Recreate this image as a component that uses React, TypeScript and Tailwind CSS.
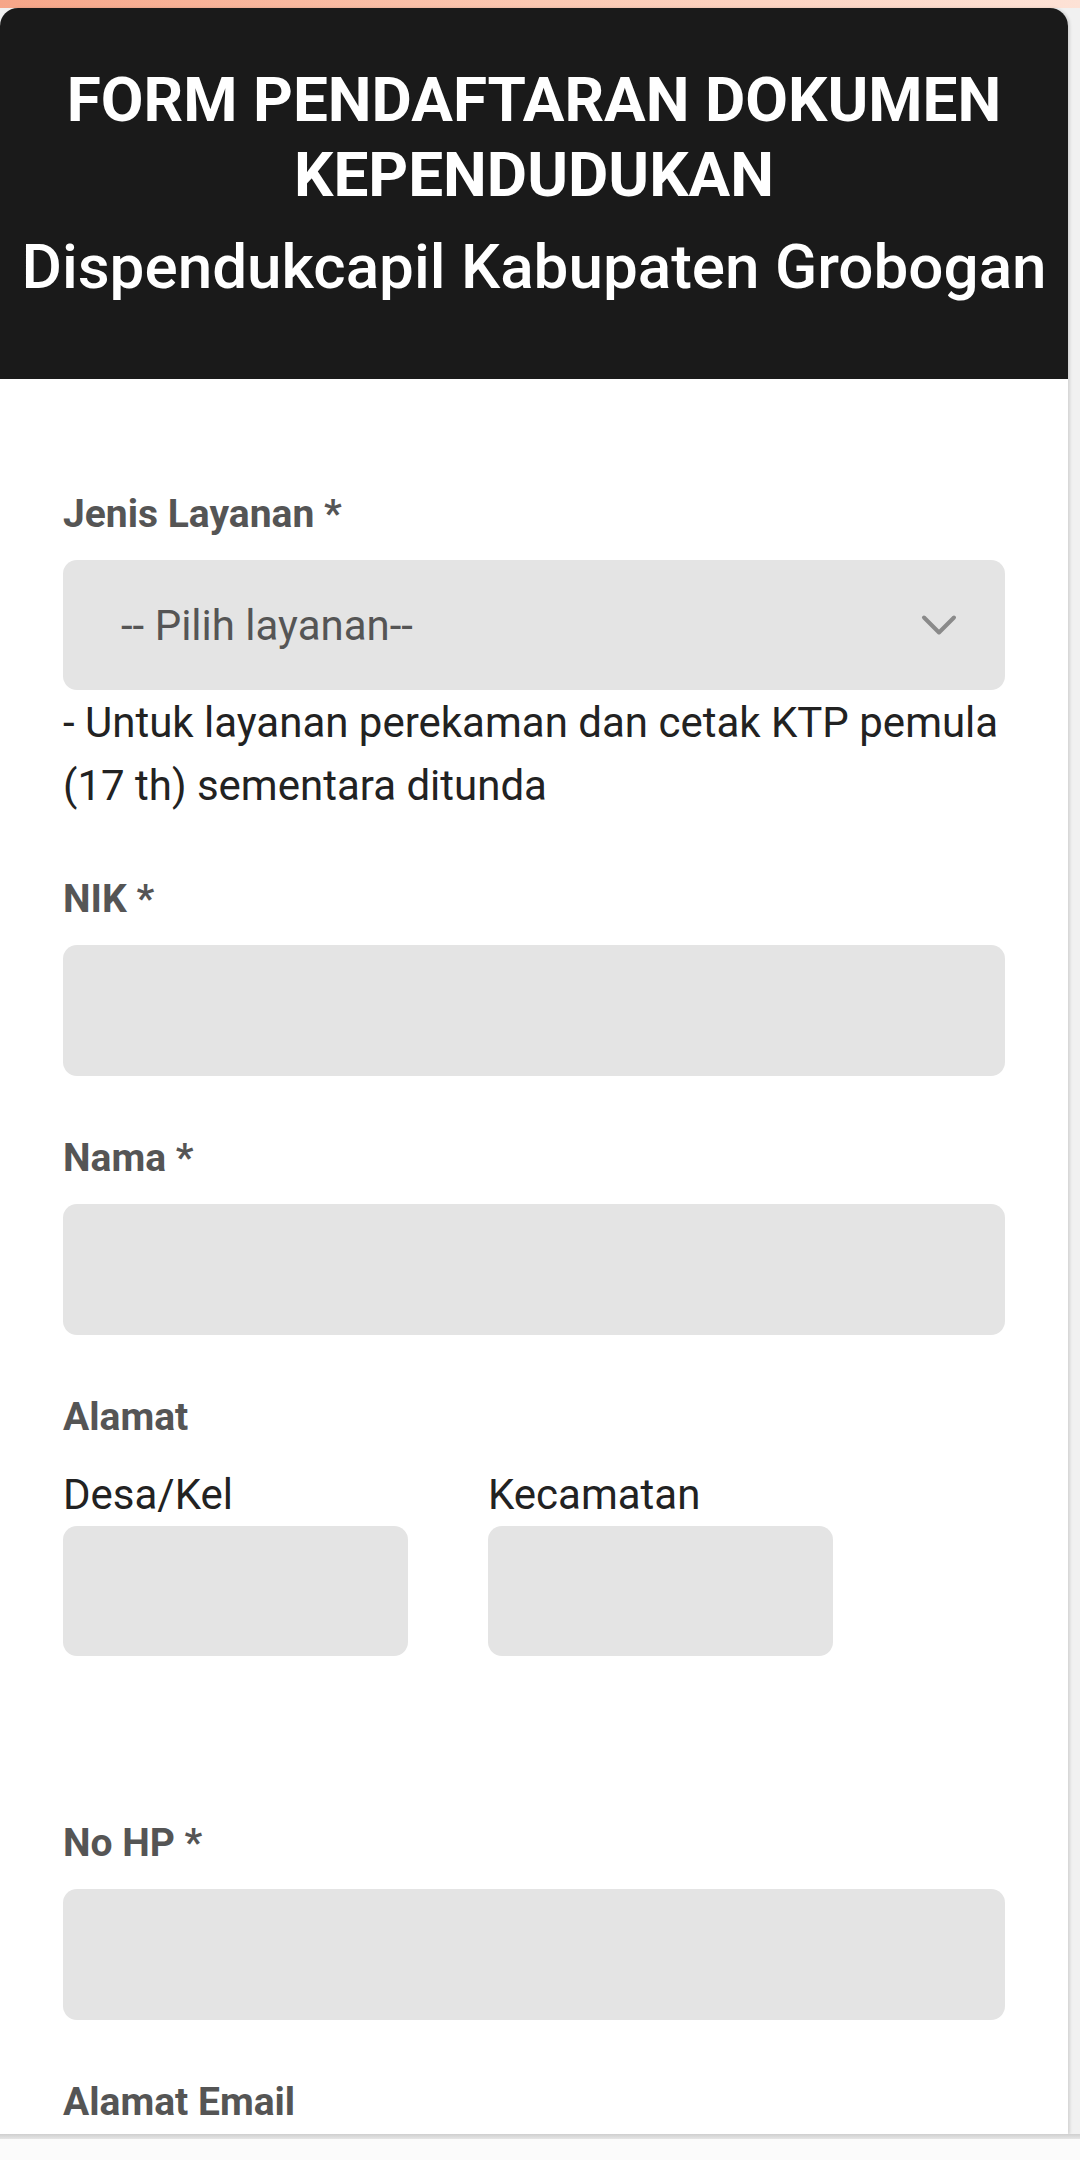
import { ChevronDown } from "lucide-react";

const Label = ({ children }: { children: React.ReactNode }) => (
  <label className="block text-[39px] leading-[46px] font-bold text-[#555555]">
    {children}
  </label>
);

const Field = ({ label }: { label: string }) => (
  <div className="mb-[59px]">
    <Label>{label}</Label>
    <input
      type="text"
      className="mt-[23px] block w-full h-[131px] rounded-[14px] bg-[#e4e4e4] outline-none px-8"
    />
  </div>
);

export default function App() {
  return (
    <div
      className="w-full h-[2160px] overflow-hidden bg-[#f1f1f1] flex flex-col"
      style={{ fontFamily: "Roboto, 'Noto Sans', sans-serif" }}
    >
      <div className="h-[8px] shrink-0 bg-gradient-to-r from-[#f6a689] via-[#fbc8b2] to-[#fde2d6]" />

      <div className="w-[1068px] h-[2126px] shrink-0 bg-white rounded-t-[18px] overflow-hidden shadow-[2px_0_3px_rgba(0,0,0,0.12)]">
        <header className="bg-[#1a1a1a] text-white text-center pt-[54px] h-[371px]">
          <h1 className="text-[62px] leading-[75px] font-bold px-10">
            FORM PENDAFTARAN DOKUMEN KEPENDUDUKAN
          </h1>
          <h2 className="mt-[17px] text-[62px] leading-[76px] font-medium">
            Dispendukcapil Kabupaten Grobogan
          </h2>
        </header>

        <form className="px-[63px] pt-[112px]">
          <Label>Jenis Layanan *</Label>
          <div className="relative mt-[23px]">
            <select
              defaultValue=""
              className="block w-full h-[130px] appearance-none rounded-[14px] bg-[#e4e4e4] pl-[58px] pr-20 text-[42px] text-[#555555] outline-none"
            >
              <option value="">-- Pilih layanan--</option>
            </select>
            <ChevronDown
              className="absolute right-[36px] top-1/2 -translate-y-1/2 pointer-events-none text-[#8a8a8a]"
              size={60}
              strokeWidth={1.6}
            />
          </div>
          <p className="text-[42px] leading-[63px] text-[#222222] mt-px">
            - Untuk layanan perekaman dan cetak KTP pemula (17 th) sementara
            ditunda
          </p>

          <div className="mt-[59px]">
            <Field label="NIK *" />
            <Field label="Nama *" />
          </div>

          <div>
            <Label>Alamat</Label>
            <div className="mt-[23px] flex gap-[80px]">
              <div className="w-[345px]">
                <div className="text-[42px] leading-[63px] text-[#222222]">
                  Desa/Kel
                </div>
                <input
                  type="text"
                  className="block w-full h-[130px] rounded-[14px] bg-[#e4e4e4] outline-none px-6"
                />
              </div>
              <div className="w-[345px]">
                <div className="text-[42px] leading-[63px] text-[#222222]">
                  Kecamatan
                </div>
                <input
                  type="text"
                  className="block w-full h-[130px] rounded-[14px] bg-[#e4e4e4] outline-none px-6"
                />
              </div>
            </div>
          </div>

          <div className="mt-[164px]">
            <Field label="No HP *" />
          </div>
          <Label>Alamat Email</Label>
        </form>
      </div>

      <div className="h-[5px] shrink-0 bg-gradient-to-b from-[#cfcfcf] to-[#e6e6e6]" />
      <div className="flex-1 bg-[#fbfbfb]" />
    </div>
  );
}
